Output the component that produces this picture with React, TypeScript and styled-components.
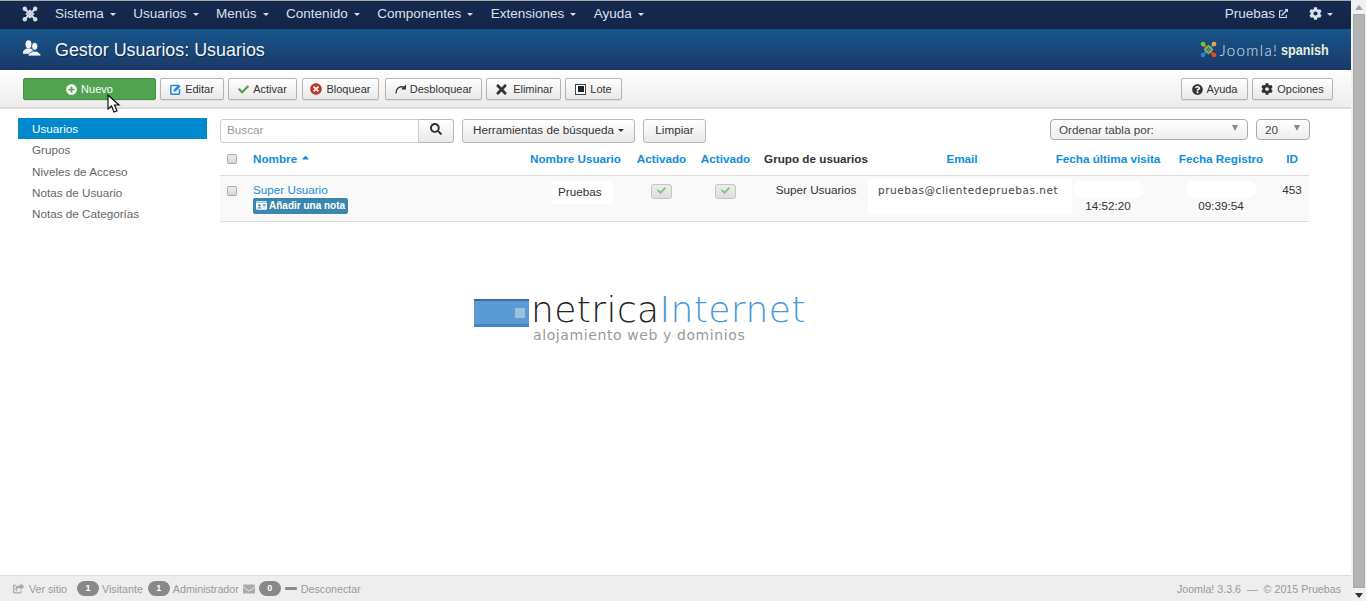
import styled, { createGlobalStyle } from "styled-components";
import {
  FaPlusCircle,
  FaCheck,
  FaTimesCircle,
  FaTimes,
  FaQuestionCircle,
  FaCog,
  FaSearch,
  FaExternalLinkAlt,
  FaShareSquare,
  FaEnvelope,
  FaIdCard,
  FaCaretUp,
} from "react-icons/fa";

const Global = createGlobalStyle`
  html, body { margin: 0; padding: 0; height: 100%; overflow: hidden; background: #fff; }
  body { font-family: "Liberation Sans", Arial, sans-serif; font-size: 12px; color: #333; }
  #root { height: 100%; }
  * { box-sizing: border-box; }
`;

const Shell = styled.div`
  position: relative;
  display: flex;
  width: 1366px;
  height: 601px;
`;

const Page = styled.div`
  flex: 1;
  min-width: 0;
  display: flex;
  flex-direction: column;
`;

const Scrollbar = styled.div`
  width: 15px;
  background: #f1f1f1;
  display: flex;
  flex-direction: column;
  align-items: center;
  justify-content: space-between;
  padding: 5px 0 3px;
`;

const ScrollThumb = styled.div`
  flex: 1;
  width: 12px;
  margin: 4px 0 5px 1px;
  background: #b3b3b3;
  border: 1px solid #a8a8a8;
`;

const ScrollArrow = styled.div<{ $up?: boolean; $dark?: boolean }>`
  width: 0;
  height: 0;
  border-left: 4px solid transparent;
  border-right: 4px solid transparent;
  ${(p) =>
    p.$up
      ? `border-bottom: 5px solid ${p.$dark ? "#333" : "#a3a3a3"};`
      : `border-top: 5px solid ${p.$dark ? "#333" : "#a3a3a3"};`}
`;

const Navbar = styled.nav`
  height: 29px;
  background: linear-gradient(#16294f, #142548);
  border-top: 1px solid #a9a9a9;
  display: flex;
  align-items: center;
  padding: 0 18px 3px 22px;
  color: #d9e0ea;
  font-size: 13.5px;
`;

const NavLogo = styled.svg`
  width: 16px;
  height: 16px;
  margin-right: 17px;
`;

const NavItem = styled.span`
  display: inline-flex;
  align-items: center;
  margin-right: 17.5px;
  white-space: nowrap;
`;

const Caret = styled.span<{ $color?: string }>`
  display: inline-block;
  width: 0;
  height: 0;
  margin-left: 6px;
  margin-top: 2px;
  border-left: 3px solid transparent;
  border-right: 3px solid transparent;
  border-top: 3px solid ${(p) => p.$color || "#d9e0ea"};
`;

const GearCaret = styled(Caret)`
  margin-left: 5px;
`;

const SearchCaret = styled(Caret)`
  margin-left: 0;
`;

const NavRight = styled.div`
  margin-left: auto;
  display: flex;
  align-items: center;
`;

const UserLink = styled.span`
  display: inline-flex;
  align-items: center;
  gap: 4px;
  margin-right: 21px;
`;

const Subhead = styled.header`
  height: 41px;
  background: linear-gradient(#17568c, #1a3867);
  display: flex;
  align-items: center;
  padding: 0 22px 0 23px;
  color: #fff;
`;

const TitleIcon = styled.svg`
  width: 18px;
  height: 16px;
  margin-top: -3px;
`;

const PageTitle = styled.h1`
  margin: 2px 0 0 14px;
  font-size: 17.9px;
  font-weight: 400;
  color: #f2f5f8;
  text-shadow: 1px 1px 1px rgba(0, 0, 0, 0.4);
`;

const Brand = styled.div`
  margin-left: auto;
  display: flex;
  align-items: center;
`;

const BrandJoomla = styled.span`
  font-family: "Lato", sans-serif;
  font-weight: 300;
  font-size: 15px;
  letter-spacing: 1.4px;
  margin-left: 2px;
  color: #dfe6ee;
`;

const BrandSpanish = styled.span`
  display: inline-block;
  font-family: "Liberation Sans", sans-serif;
  font-weight: 700;
  font-size: 15px;
  margin-left: -6px;
  transform: scaleX(0.84);
  transform-origin: right center;
  color: #e8edd8;
`;

const Toolbar = styled.div`
  height: 39px;
  background: linear-gradient(#fff, #ececec);
  border-bottom: 2px solid #dcdcdc;
  display: flex;
  align-items: flex-start;
  padding: 8px 18px 0 23px;
  gap: 4px;
`;

const ToolButton = styled.button<{ $width?: number; $primary?: boolean; $offset?: number }>`
  height: 22px;
  width: ${(p) => (p.$width ? `${p.$width}px` : "auto")};
  margin-left: ${(p) => p.$offset ?? 0}px;
  display: inline-flex;
  align-items: center;
  justify-content: center;
  gap: 4px;
  padding: 0;
  font: 11px "Liberation Sans", sans-serif;
  border-radius: 2px;
  color: ${(p) => (p.$primary ? "#fff" : "#333")};
  border: 1px solid ${(p) => (p.$primary ? "#45923f" : "#b4b4b4")};
  background: ${(p) => (p.$primary ? "#51a351" : "linear-gradient(#fff, #e8e8e8)")};
  box-shadow: 0 1px 1px rgba(0, 0, 0, 0.08);
`;

const ToolSpacer = styled.div`
  flex: 1;
`;

const LoteIcon = styled.span`
  width: 11px;
  height: 11px;
  border: 1px solid #444;
  background: #fff;
  display: inline-flex;
  align-items: center;
  justify-content: center;
  &::after {
    content: "";
    width: 6px;
    height: 6px;
    background: #222;
  }
`;

const Body = styled.main`
  flex: 1;
  min-height: 0;
  display: grid;
  grid-template-columns: 189px 1090px;
  column-gap: 13px;
  padding: 9px 0 0 18px;
  align-content: start;
`;

const Sidebar = styled.ul`
  list-style: none;
  margin: 0;
  padding: 0;
`;

const SideItem = styled.li<{ $active?: boolean }>`
  height: 21.3px;
  line-height: 21.3px;
  padding-left: 14px;
  font-size: 11.7px;
  color: ${(p) => (p.$active ? "#fff" : "#666")};
  background: ${(p) => (p.$active ? "#0088cc" : "transparent")};
`;

const Content = styled.section`
  min-width: 0;
`;

const FilterBar = styled.div`
  display: flex;
  align-items: flex-start;
  height: 31px;
  padding-top: 1px;
`;

const SearchInput = styled.div`
  width: 199px;
  height: 24px;
  border: 1px solid #ccc;
  border-radius: 3px 0 0 3px;
  color: #999;
  font-size: 11.7px;
  line-height: 20px;
  padding-left: 6px;
`;

const FilterButton = styled.button<{ $width: number; $attached?: boolean }>`
  width: ${(p) => p.$width}px;
  height: 24px;
  margin-left: ${(p) => (p.$attached ? "0" : "8px")};
  border: 1px solid #b8b8b8;
  border-left-width: ${(p) => (p.$attached ? "0" : "1px")};
  border-radius: ${(p) => (p.$attached ? "0 3px 3px 0" : "3px")};
  background: linear-gradient(#fff, #e9e9e9);
  font: 11.7px "Liberation Sans", sans-serif;
  color: #333;
  padding: 0 0 4px;
  display: inline-flex;
  align-items: center;
  justify-content: center;
  gap: 4px;
`;

const SelectBox = styled.div<{ $width: number; $left?: boolean }>`
  width: ${(p) => p.$width}px;
  height: 21px;
  margin-left: ${(p) => (p.$left ? "auto" : "8px")};
  border: 1px solid #aaa;
  border-radius: 4px;
  background: linear-gradient(#fff, #eee);
  font-size: 11.7px;
  color: #444;
  display: flex;
  align-items: center;
  justify-content: space-between;
  padding: 0 9px 0 8px;
`;

const SelectArrow = styled.span`
  width: 0;
  height: 0;
  margin-top: -3px;
  border-left: 3.5px solid transparent;
  border-right: 3.5px solid transparent;
  border-top: 6px solid #888;
`;

const Table = styled.table`
  width: 1089px;
  table-layout: fixed;
  border-collapse: collapse;
`;

const HeadCell = styled.th<{ $dark?: boolean; $left?: boolean }>`
  height: 26px;
  padding: 0 0 6px ${(p) => (p.$left ? "9px" : "0")};
  font-size: 11.7px;
  font-weight: 700;
  white-space: nowrap;
  text-align: ${(p) => (p.$left ? "left" : "center")};
  color: ${(p) => (p.$dark ? "#333" : "#0f8fd8")};
  border-bottom: 1px solid #ddd;
`;

const Row = styled.tr`
  background: #f9f9f9;
  border-bottom: 1px solid #ddd;
`;

const Cell = styled.td<{ $left?: boolean }>`
  height: 46px;
  padding: 7px 0 0 ${(p) => (p.$left ? "9px" : "0")};
  vertical-align: top;
  text-align: ${(p) => (p.$left ? "left" : "center")};
  font-size: 11.7px;
  color: #333;
  white-space: nowrap;
`;

const CheckBox = styled.span`
  display: inline-block;
  width: 10px;
  height: 10px;
  margin-top: 3px;
  border: 1px solid #aaa;
  border-radius: 2px;
  background: linear-gradient(#eee, #d8d8d8);
`;

const NameLink = styled.a`
  display: block;
  color: #1a8fd6;
  font-size: 11.7px;
  line-height: 14px;
`;

const NoteBadge = styled.span`
  display: inline-flex;
  align-items: center;
  gap: 2px;
  height: 16px;
  margin-top: 1px;
  padding: 0 3px;
  border-radius: 2px;
  background: #3a87ad;
  color: #fff;
  font-size: 10px;
  font-weight: 700;
`;

const UserNamePatch = styled.span`
  display: block;
  width: 61px;
  margin: -2px 0 0 30px;
  padding: 4px 0 6px 6px;
  background: #fff;
  text-align: left;
`;

const StateButton = styled.span`
  display: inline-flex;
  align-items: center;
  justify-content: center;
  width: 21px;
  height: 15px;
  margin-top: 1px;
  padding-bottom: 2px;
  border: 1px solid #c4c4c4;
  border-radius: 3px;
  background: linear-gradient(#eee, #ddd);
  color: #7cc47c;
  font-size: 9px;
`;

const EmailPatch = styled.span`
  display: block;
  width: 204px;
  height: 35px;
  margin: -4px 0 0 -7px;
  padding: 5px 0 0 10px;
  background: #fff;
  text-align: left;
  font-family: "DejaVu Sans", sans-serif;
  font-size: 10.5px;
  letter-spacing: 0.55px;
  color: #444;
`;

const DatePatch = styled.span`
  display: block;
  width: 71px;
  height: 17px;
  margin: -2px auto 1px;
  background: #fff;
  border-radius: 9px;
`;

const Logo = styled.div`
  grid-column: 1 / -1;
  display: flex;
  flex-direction: column;
  margin: 68px 0 0 456px;
`;

const LogoTop = styled.div`
  display: flex;
  align-items: center;
  height: 36px;
  line-height: 36px;
`;

const LogoBlock = styled.svg`
  width: 55px;
  height: 28px;
  margin: 6px 2px 0 0;
`;

const LogoWord = styled.span<{ $blue?: boolean }>`
  font-family: "DejaVu Sans", "Lato", sans-serif;
  font-weight: 200;
  font-size: 36px;
  letter-spacing: 0.4px;
  color: ${(p) => (p.$blue ? "#4a98da" : "#222")};
`;

const LogoTag = styled.span`
  margin: 1px 0 0 59px;
  height: 12px;
  line-height: 12px;
  font-family: "DejaVu Sans", sans-serif;
  font-size: 14px;
  letter-spacing: 0.6px;
  color: #9a9a9a;
`;

const Footer = styled.footer`
  height: 26px;
  background: #eeeeee;
  border-top: 1px solid #ddd;
  display: flex;
  align-items: center;
  padding: 0 10px 0 13px;
  color: #999;
  font-size: 10.7px;
`;

const FootItem = styled.span<{ $gap?: number }>`
  display: inline-flex;
  align-items: center;
  gap: 3px;
  margin-right: ${(p) => p.$gap ?? 4}px;
`;

const FootIcon = styled.span<{ $space?: number }>`
  display: inline-flex;
  margin-right: ${(p) => p.$space ?? 1}px;
  color: #aaa;
`;

const DashIcon = styled.span`
  display: inline-block;
  width: 12px;
  height: 3px;
  margin-right: 1px;
  border-radius: 1px;
  background: #8a8a8a;
`;

const Pill = styled.span`
  display: inline-block;
  width: 22px;
  height: 15px;
  line-height: 15px;
  border-radius: 8px;
  background: #888;
  color: #fff;
  text-align: center;
  font-size: 9px;
  font-weight: 700;
`;

const FootRight = styled.span`
  margin-left: auto;
`;

const Pointer = styled.svg`
  position: absolute;
  left: 107px;
  top: 94px;
  width: 14px;
  height: 20px;
`;

const navItems = ["Sistema", "Usuarios", "Menús", "Contenido", "Componentes", "Extensiones", "Ayuda"];
const sideItems = ["Usuarios", "Grupos", "Niveles de Acceso", "Notas de Usuario", "Notas de Categorías"];
const columnWidths = [24, 278, 107, 65, 63, 118, 174, 118, 108, 34];

function JoomlaMark({ colored }: { colored?: boolean }) {
  const c = colored
    ? ["#7ac143", "#f9a541", "#f44321", "#2f7fc9"]
    : ["#d5dbe4", "#d5dbe4", "#d5dbe4", "#d5dbe4"];
  return (
    <>
      <path d="M3 3 L13 13" stroke={colored ? c[2] : c[0]} strokeWidth="2" fill="none" />
      <path d="M13 3 L3 13" stroke={colored ? c[3] : c[1]} strokeWidth="2" fill="none" />
      <path d="M3 5 L5 3 M8 4.500 L11.500 8 L8 11.500 L4.500 8 Z" stroke={c[0]} strokeWidth="1.600" fill="none" />
      <circle cx="2.800" cy="2.800" r="2.200" fill={c[0]} />
      <circle cx="13.200" cy="2.800" r="2.200" fill={c[1]} />
      <circle cx="13.200" cy="13.200" r="2.200" fill={c[2]} />
      <circle cx="2.800" cy="13.200" r="2.200" fill={c[3]} />
    </>
  );
}

export default function App() {
  return (
    <Shell>
      <Global />
      <Page>
        <Navbar>
          <NavLogo viewBox="0 0 16 16">
            <JoomlaMark />
          </NavLogo>
          {navItems.map((item) => (
            <NavItem key={item}>
              {item}
              <Caret />
            </NavItem>
          ))}
          <NavRight>
            <UserLink>
              Pruebas
              <FaExternalLinkAlt size={9} />
            </UserLink>
            <FaCog size={13} />
            <GearCaret />
          </NavRight>
        </Navbar>

        <Subhead>
          <TitleIcon viewBox="0 0 18 16" fill="#f4f6f9">
            <ellipse cx="5.500" cy="4.300" rx="3" ry="4.100" />
            <path d="M0 12.500c0-2.500 2.500-3 3.500-4h4c1 .8 2 1.200 3 1.800l-4 3.400H0z" />
            <ellipse cx="11.700" cy="6.300" rx="3.100" ry="3.900" stroke="#174c80" strokeWidth=".8" />
            <path d="M5 16c0-3 3.200-3.500 4.500-4.800h4.400c1.300 1.300 4.100 1.800 4.100 4.800z" stroke="#174c80" strokeWidth=".8" />
          </TitleIcon>
          <PageTitle>Gestor Usuarios: Usuarios</PageTitle>
          <Brand>
            <svg width="17" height="17" viewBox="0 0 16 16">
              <JoomlaMark colored />
            </svg>
            <BrandJoomla>Joomla!</BrandJoomla>
            <BrandSpanish>spanish</BrandSpanish>
          </Brand>
        </Subhead>

        <Toolbar>
          <ToolButton $primary $width={133}>
            <FaPlusCircle size={11} />
            Nuevo
          </ToolButton>
          <ToolButton $width={64}>
            <svg width="11" height="11" viewBox="0 0 11 11" fill="none">
              <path d="M8 1.500H1.500A.7.7 0 0 0 .8 2.200v7.300a.7.7 0 0 0 .7.700h7.300a.7.7 0 0 0 .7-.7V5" stroke="#2a8ad4" strokeWidth="1.500" />
              <path d="M3.500 7.700l.5-2.300L8.800.6l1.800 1.800-4.800 4.800z" fill="#2a8ad4" />
            </svg>
            Editar
          </ToolButton>
          <ToolButton $width={69}>
            <FaCheck size={11} color="#51a351" />
            Activar
          </ToolButton>
          <ToolButton $width={77} $offset={1}>
            <FaTimesCircle size={12} color="#bd362f" />
            Bloquear
          </ToolButton>
          <ToolButton $width={97} $offset={2}>
            <svg width="11" height="10" viewBox="0 0 11 10" fill="none">
              <path d="M1 9.500C.8 5.500 3.500 1.800 8.500 3" stroke="#333" strokeWidth="1.300" />
              <path d="M11 .5V5.500H6z" fill="#333" />
            </svg>
            Desbloquear
          </ToolButton>
          <ToolButton $width={75}>
            <FaTimes size={15} />
            Eliminar
          </ToolButton>
          <ToolButton $width={57}>
            <LoteIcon />
            Lote
          </ToolButton>
          <ToolSpacer />
          <ToolButton $width={67}>
            <FaQuestionCircle size={11} />
            Ayuda
          </ToolButton>
          <ToolButton $width={81}>
            <FaCog size={12} />
            Opciones
          </ToolButton>
        </Toolbar>

        <Body>
          <Sidebar>
            {sideItems.map((item, i) => (
              <SideItem key={item} $active={i === 0}>
                {item}
              </SideItem>
            ))}
          </Sidebar>
          <Content>
            <FilterBar>
              <SearchInput>Buscar</SearchInput>
              <FilterButton $width={35} $attached>
                <FaSearch size={12} />
              </FilterButton>
              <FilterButton $width={173}>
                Herramientas de búsqueda
                <SearchCaret $color="#333" />
              </FilterButton>
              <FilterButton $width={63}>Limpiar</FilterButton>
              <SelectBox $width={198} $left>
                Ordenar tabla por:
                <SelectArrow />
              </SelectBox>
              <SelectBox $width={54}>
                20
                <SelectArrow />
              </SelectBox>
            </FilterBar>
            <Table>
              <colgroup>
                {columnWidths.map((w, i) => (
                  <col key={i} style={{ width: w }} />
                ))}
              </colgroup>
              <thead>
                <tr>
                  <HeadCell>
                    <CheckBox />
                  </HeadCell>
                  <HeadCell $left>
                    Nombre <FaCaretUp size={11} />
                  </HeadCell>
                  <HeadCell>Nombre Usuario</HeadCell>
                  <HeadCell>Activado</HeadCell>
                  <HeadCell>Activado</HeadCell>
                  <HeadCell $dark>Grupo de usuarios</HeadCell>
                  <HeadCell>Email</HeadCell>
                  <HeadCell>Fecha última visita</HeadCell>
                  <HeadCell>Fecha Registro</HeadCell>
                  <HeadCell>ID</HeadCell>
                </tr>
              </thead>
              <tbody>
                <Row>
                  <Cell>
                    <CheckBox />
                  </Cell>
                  <Cell $left>
                    <NameLink>Super Usuario</NameLink>
                    <NoteBadge>
                      <FaIdCard size={11} />
                      Añadir una nota
                    </NoteBadge>
                  </Cell>
                  <Cell>
                    <UserNamePatch>Pruebas</UserNamePatch>
                  </Cell>
                  <Cell>
                    <StateButton>
                      <FaCheck />
                    </StateButton>
                  </Cell>
                  <Cell>
                    <StateButton>
                      <FaCheck />
                    </StateButton>
                  </Cell>
                  <Cell>Super Usuarios</Cell>
                  <Cell>
                    <EmailPatch>pruebas@clientedepruebas.net</EmailPatch>
                  </Cell>
                  <Cell>
                    <DatePatch />
                    14:52:20
                  </Cell>
                  <Cell>
                    <DatePatch />
                    09:39:54
                  </Cell>
                  <Cell>453</Cell>
                </Row>
              </tbody>
            </Table>
          </Content>
          <Logo>
            <LogoTop>
              <LogoBlock viewBox="0 0 55 28">
                <rect width="55" height="28" fill="#5b9bd5" />
                <rect width="55" height="2" fill="#3b6f9f" />
                <rect y="25" width="55" height="3" fill="#3f86c8" />
                <rect x="41" y="9" width="10" height="10" fill="#9cc0e0" />
              </LogoBlock>
              <LogoWord>netrica</LogoWord>
              <LogoWord $blue>Internet</LogoWord>
            </LogoTop>
            <LogoTag>alojamiento web y dominios</LogoTag>
          </Logo>
        </Body>

        <Footer>
          <FootItem $gap={10}>
            <FootIcon $space={2}>
              <FaShareSquare size={11} />
            </FootIcon>
            Ver sitio
          </FootItem>
          <FootItem $gap={5}>
            <Pill>1</Pill>
            Visitante
          </FootItem>
          <FootItem>
            <Pill>1</Pill>
            Administrador
          </FootItem>
          <FootItem>
            <FootIcon>
              <FaEnvelope size={12} />
            </FootIcon>
            <Pill>0</Pill>
          </FootItem>
          <FootItem>
            <DashIcon />
            Desconectar
          </FootItem>
          <FootRight>Joomla! 3.3.6 &nbsp;—&nbsp; © 2015 Pruebas</FootRight>
        </Footer>
      </Page>
      <Scrollbar>
        <ScrollArrow $up />
        <ScrollThumb />
        <ScrollArrow $dark />
      </Scrollbar>
      <Pointer viewBox="0 0 14 20">
        <path d="M1 1 L1 15 L4.500 12 L7 18 L10 17 L7.500 11 L12 11 Z" fill="#fff" stroke="#111" strokeWidth="1.200" />
      </Pointer>
    </Shell>
  );
}
